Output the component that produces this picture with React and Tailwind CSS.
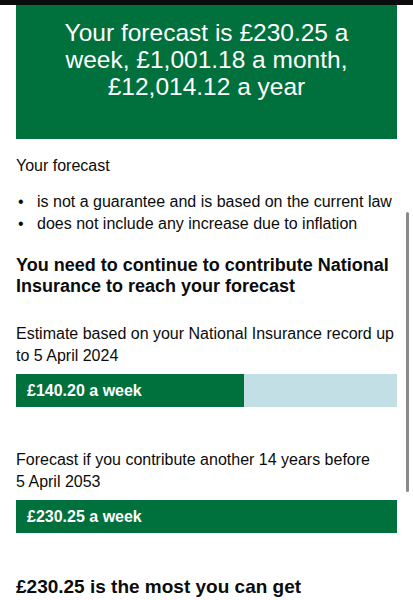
export default function App() {
  const bullets = [
    "is not a guarantee and is based on the current law",
    "does not include any increase due to inflation",
  ];

  return (
    <div
      className="relative w-[413px] h-[600px] overflow-hidden bg-white text-[#0b0c0c]"
      style={{ fontFamily: '"Liberation Sans", Arial, sans-serif' }}
    >
      <div className="h-[5px] bg-[#0b0c0c]" />

      <div className="px-4">
        <div className="h-[134px] bg-[#00703c] text-white text-center text-[24.5px] leading-[27px] pt-[14px] px-6">
          Your forecast is £230.25 a week, £1,001.18 a month, £12,014.12 a year
        </div>

        <p className="mt-[16px] text-[16px] leading-[22px]">Your forecast</p>

        <ul className="mt-[14px] text-[16px] leading-[22px]">
          {bullets.map((b) => (
            <li key={b} className="flex">
              <span className="w-[21px] pl-[2px]">•</span>
              <span>{b}</span>
            </li>
          ))}
        </ul>

        <h2 className="mt-[20px] text-[18px] leading-[21px] font-bold">
          You need to continue to contribute National Insurance to reach your forecast
        </h2>

        <p className="mt-[26px] text-[16px] leading-[22px]">
          Estimate based on your National Insurance record up to 5 April 2024
        </p>

        <div className="mt-[7px] flex h-[33px] bg-[#c2dfe5]">
          <div className="w-[228px] bg-[#00703c] text-white font-bold text-[16px] leading-[33px] pl-[11px]">
            £140.20 a week
          </div>
        </div>

        <p className="mt-[42px] pr-[24px] text-[16px] leading-[22px]">
          Forecast if you contribute another 14 years before 5 April 2053
        </p>

        <div className="mt-[7px] h-[33px] bg-[#00703c] text-white font-bold text-[16px] leading-[33px] pl-[11px]">
          £230.25 a week
        </div>

        <h2 className="mt-[42px] text-[19px] leading-[24px] font-bold">
          £230.25 is the most you can get
        </h2>
      </div>

      <div className="absolute left-[406px] top-[212px] w-[3px] h-[280px] rounded-full bg-[#8a8a8a]" />
    </div>
  );
}
